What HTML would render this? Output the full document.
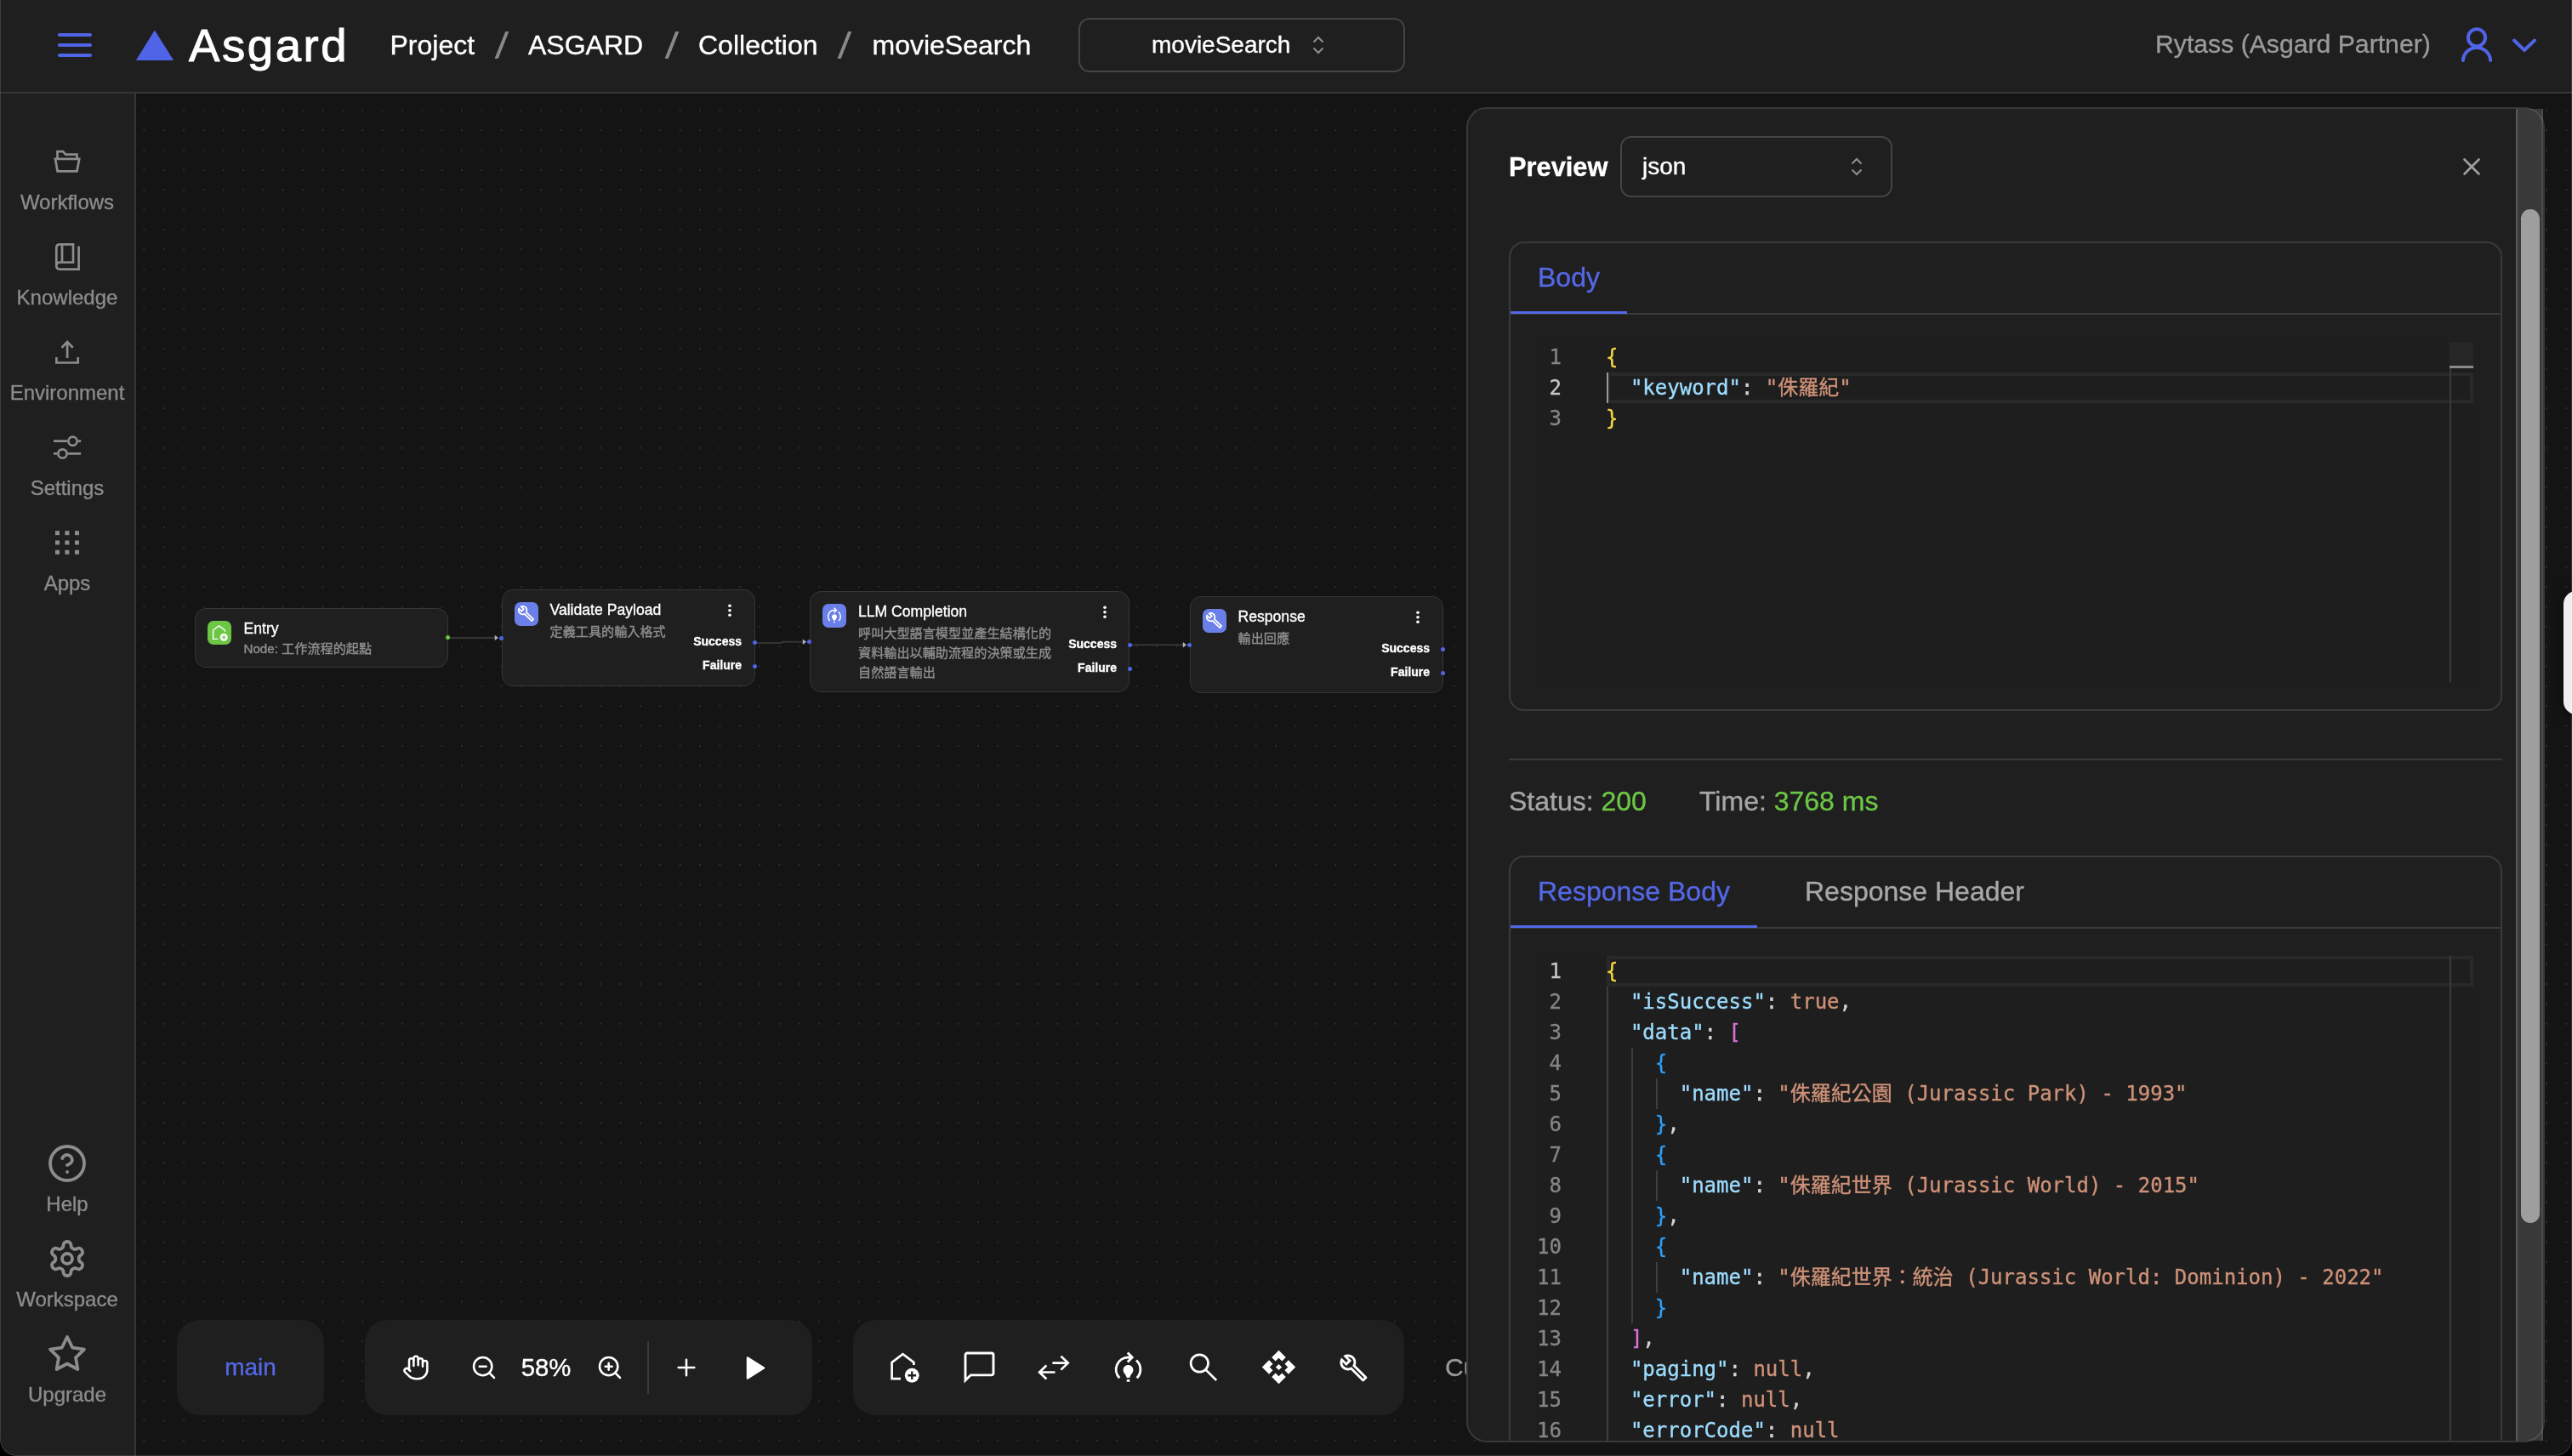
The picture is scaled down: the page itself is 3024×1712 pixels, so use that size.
<!DOCTYPE html>
<html lang="zh-Hant"><head><meta charset="utf-8"><title>Asgard - movieSearch</title>
<style>
*{box-sizing:border-box;margin:0;padding:0}
html,body{width:3024px;height:1712px;overflow:hidden;background:#141414}
body{position:relative;font-family:"Liberation Sans","Noto Sans CJK TC",sans-serif;color:#fff;-webkit-font-smoothing:antialiased;-webkit-text-stroke-width:0.350px}
#root{position:absolute;left:0;top:0;width:3024px;height:1712px;overflow:hidden;will-change:transform}
.abs{position:absolute}
.t{position:absolute;white-space:nowrap;line-height:1}
#canvas{position:absolute;left:160px;top:110px;width:2864px;height:1602px;background-color:#141414;
 background-image:radial-gradient(circle,rgba(120,120,120,0.7) 0.300px,rgba(120,120,120,0) 0.900px);background-size:23.344px 23.344px;background-position:-2.222px 8.228px}
#header{position:absolute;left:0;top:0;width:3024px;height:110px;background:#1f1f1f;border-bottom:2px solid #353535}
#sidebar{position:absolute;left:0;top:110px;width:160px;height:1602px;background:#1f1f1f;border-right:2px solid #353535}
.sl{position:absolute;left:0;width:158px;text-align:center;font-size:24px;line-height:28px;color:#8c8c8c}
.bc{font-size:32px;color:#fff}
.sep{font-size:42px;color:#8a8a8a;transform:skewX(-7deg);-webkit-text-stroke:0.800px #8a8a8a}
.tb{position:absolute;top:1552px;height:112px;background:#1f1f1f;border-radius:26px}
svg{position:absolute;overflow:visible}
.node{position:absolute;background:#1f1f1f;border:1.500px solid #353535;border-radius:13px}
.nicon{position:absolute;width:28px;height:28px;border-radius:7px}
.nt{position:absolute;white-space:nowrap;font-size:17.600px;line-height:20px;color:#fff}
.nd{position:absolute;font-size:15.150px;line-height:23.3px;color:#8f8f8f}
.nh{position:absolute;white-space:nowrap;font-size:14px;line-height:16px;font-weight:700;color:#fff;text-align:right}
.dot{position:absolute;width:5px;height:5px;border-radius:50%;background:#4f64e6}
.card{position:absolute;left:1774px;width:1168px;border:2px solid #3a3a3a;border-radius:18px;background:#1f1f1f}
.ln{position:absolute;left:0;width:30px;text-align:right;font-family:"DejaVu Sans Mono","Liberation Mono","Noto Sans CJK TC",monospace;font-size:24px;line-height:36px;color:#858585;white-space:pre}
.cl{position:absolute;left:82px;font-family:"DejaVu Sans Mono","Liberation Mono","Noto Sans CJK TC",monospace;font-size:24px;line-height:36px;color:#d4d4d4;white-space:pre}
.k{color:#9cdcfe} .s{color:#ce9178} .b1{color:#f5d53f} .b2{color:#d670d6} .b3{color:#2f9df5}
.ed{position:absolute;left:1806px;width:1102px;background:#1e1e1e;overflow:hidden}
.guide{position:absolute;width:2px;background:#404040}
</style></head>
<body>
<div id="root">
<div id="canvas"></div>
<svg style="left:0;top:0" width="3024" height="1712">
<g fill="none" stroke="#343434" stroke-width="2">
<path d="M526.700 749.900H583"/>
<path d="M887.500 755.900H918.500L920.500 754.800H945"/>
<path d="M1328.200 758.200H1392"/>
</g>
<g fill="#b1b1b7">
<path d="M581.700 746.700L586 749.900 581.700 753.100z"/>
<path d="M943.800 751.600L948.100 754.800 943.800 758z"/>
<path d="M1390.800 755L1395.100 758.200 1390.800 761.400z"/>
</g></svg>
<div class="node" style="left:229px;top:715px;width:298px;height:70px"><div class="nicon" style="left:13.5px;top:13.500px;background:#6cc644"><svg style="left:2.5px;top:2.5px" width="23" height="23" viewBox="0 0 24 24"><path fill="none" stroke="#fff" stroke-width="1.500" stroke-linejoin="miter" d="M10.600 20.200H4.800V9.400L12 4l7.200 5.400v1.800"/><circle cx="18" cy="18" r="4.7" fill="#fff"/><path stroke="#6cc644" stroke-width="1.3" fill="none" d="M15.3 18h5.4M18 15.3v5.4"/></svg></div><div class="nt" style="left:56.5px;top:13px">Entry</div><div class="nd" style="left:56.5px;top:34.5px;white-space:nowrap;">Node: 工作流程的起點</div></div>
<div class="node" style="left:590px;top:693px;width:297.5px;height:114px"><div class="nicon" style="left:13.5px;top:13.500px;background:#6b7fe8"><svg style="left:3.7px;top:3.7px" width="21" height="21" viewBox="0 0 24 24"><path fill="#fff" d="M22.61 18.99l-9.08-9.08c.93-2.34.45-5.1-1.44-7C9.79.61 6.21.4 3.66 2.26L7.5 6.11 6.08 7.52 2.25 3.69C.39 6.23.6 9.82 2.9 12.11c1.86 1.86 4.57 2.35 6.89 1.48l9.11 9.11c.39.39 1.02.39 1.41 0l2.3-2.3c.4-.38.4-1.01 0-1.41zm-3 1.6l-9.46-9.46c-.61.45-1.29.72-2 .82-1.36.2-2.79-.21-3.83-1.25C3.37 9.76 2.93 8.5 3 7.26l3.09 3.09 4.24-4.24-3.09-3.09c1.24-.07 2.49.37 3.44 1.31 1.08 1.08 1.49 2.57 1.24 3.96-.12.71-.42 1.37-.88 1.96l9.45 9.45-.88.89z"/></svg></div><div class="nt" style="left:55.5px;top:12.5px">Validate Payload</div><div class="nd" style="left:55.5px;top:36.9px;white-space:nowrap;">定義工具的輸入格式</div><svg style="left:263.5px;top:16px" width="6" height="16" viewBox="0 0 6 16"><circle cx="3" cy="2.2" r="1.800" fill="#fff"/><circle cx="3" cy="7.700" r="1.800" fill="#fff"/><circle cx="3" cy="13.200" r="1.800" fill="#fff"/></svg></div>
<div class="node" style="left:952px;top:695px;width:376px;height:119px"><div class="nicon" style="left:13.5px;top:13.500px;background:#6b7fe8"><svg style="left:3px;top:3px" width="22" height="22" viewBox="0 0 24 24"><path fill="none" stroke="#fff" stroke-width="1.6" d="M6.3 18.6A8 8 0 0 1 12 5h2.2M11.6 1.9L14.6 5l-3 3.1M17.3 7A8 8 0 0 1 17.7 18.6"/><path fill="#fff" d="M15.3 13.4c0 1.9-2.1 3.2-2.3 5h-2c-.2-1.800-2.300-3.100-2.300-5 0-1.820 1.480-3.300 3.300-3.300s3.300 1.480 3.300 3.300zM11 19.600h2V21h-2z"/></svg></div><div class="nt" style="left:56px;top:12.5px">LLM Completion</div><div class="nd" style="left:56px;top:36.9px;width:234px;">呼叫大型語言模型並產生結構化的資料輸出以輔助流程的決策或生成自然語言輸出</div><svg style="left:343px;top:16px" width="6" height="16" viewBox="0 0 6 16"><circle cx="3" cy="2.2" r="1.800" fill="#fff"/><circle cx="3" cy="7.700" r="1.800" fill="#fff"/><circle cx="3" cy="13.200" r="1.800" fill="#fff"/></svg></div>
<div class="node" style="left:1399px;top:701px;width:297.5px;height:114px"><div class="nicon" style="left:13.5px;top:13.500px;background:#6b7fe8"><svg style="left:3.7px;top:3.7px" width="21" height="21" viewBox="0 0 24 24"><path fill="#fff" d="M22.61 18.99l-9.08-9.08c.93-2.34.45-5.1-1.44-7C9.79.61 6.21.4 3.66 2.26L7.5 6.11 6.08 7.52 2.25 3.69C.39 6.23.6 9.82 2.9 12.11c1.86 1.86 4.57 2.35 6.89 1.48l9.11 9.11c.39.39 1.02.39 1.41 0l2.3-2.3c.4-.38.4-1.01 0-1.41zm-3 1.6l-9.46-9.46c-.61.45-1.29.72-2 .82-1.36.2-2.79-.21-3.83-1.25C3.37 9.76 2.93 8.5 3 7.26l3.09 3.09 4.24-4.24-3.09-3.09c1.24-.07 2.49.37 3.44 1.31 1.08 1.08 1.49 2.57 1.24 3.96-.12.71-.42 1.37-.88 1.96l9.45 9.45-.88.89z"/></svg></div><div class="nt" style="left:55.5px;top:12.5px">Response</div><div class="nd" style="left:55.5px;top:36.9px;white-space:nowrap;">輸出回應</div><svg style="left:263.5px;top:16px" width="6" height="16" viewBox="0 0 6 16"><circle cx="3" cy="2.2" r="1.800" fill="#fff"/><circle cx="3" cy="7.700" r="1.800" fill="#fff"/><circle cx="3" cy="13.200" r="1.800" fill="#fff"/></svg></div>
<div class="nh" style="right:2152px;top:745.5px">Success</div>
<div class="nh" style="right:2152px;top:773.5px">Failure</div>
<div class="nh" style="right:1711px;top:748.5px">Success</div>
<div class="nh" style="right:1711px;top:776.5px">Failure</div>
<div class="nh" style="right:1343px;top:753.5px">Success</div>
<div class="nh" style="right:1343px;top:781.5px">Failure</div>
<div class="dot" style="left:524.2px;top:747.4px;background:#6cc644"></div>
<div class="dot" style="left:587.3px;top:747.5px;background:#4f64e6"></div>
<div class="dot" style="left:884.95px;top:753.4px;background:#4f64e6"></div>
<div class="dot" style="left:884.95px;top:781.3px;background:#4f64e6"></div>
<div class="dot" style="left:949.1px;top:752.3px;background:#4f64e6"></div>
<div class="dot" style="left:1325.7px;top:755.7px;background:#4f64e6"></div>
<div class="dot" style="left:1325.7px;top:783.6px;background:#4f64e6"></div>
<div class="dot" style="left:1396.2px;top:755.7px;background:#4f64e6"></div>
<div class="dot" style="left:1693.9px;top:761.0px;background:#4f64e6"></div>
<div class="dot" style="left:1693.9px;top:789.0px;background:#4f64e6"></div>
<div class="tb" style="left:208px;width:173px"></div>
<div class="t" style="left:208px;width:173px;text-align:center;top:1592px;font-size:28px;color:#5468e7;line-height:32px">main</div>
<div class="tb" style="left:429px;width:526px"></div>
<div class="tb" style="left:1003px;width:648px"></div>
<svg style="left:473.0px;top:1592.0px" width="32" height="32" viewBox="0 0 24 24" fill="none" stroke="#fff" stroke-width="1.9" stroke-linecap="round" stroke-linejoin="round"><path d="M18 11V6a2 2 0 0 0-2-2a2 2 0 0 0-2 2"/><path d="M14 10V4a2 2 0 0 0-2-2a2 2 0 0 0-2 2v2"/><path d="M10 10.500V6a2 2 0 0 0-2-2a2 2 0 0 0-2 2v8"/><path d="M18 8a2 2 0 1 1 4 0v6a8 8 0 0 1-8 8h-2c-2.800 0-4.500-.86-5.990-2.340l-3.600-3.600a2 2 0 0 1 2.830-2.820L7 15"/></svg>
<svg style="left:552.8px;top:1592.0px" width="32" height="32" viewBox="0 0 24 24" fill="none" stroke="#fff" stroke-width="1.9" stroke-linecap="round" stroke-linejoin="round"><circle cx="11" cy="11" r="8"/><path d="M21 21l-4.350-4.350M8 11h6"/></svg>
<div class="t" style="left:592px;width:100px;text-align:center;top:1592px;font-size:29.300px;line-height:32px;color:#fff">58%</div>
<svg style="left:700.7px;top:1592.0px" width="32" height="32" viewBox="0 0 24 24" fill="none" stroke="#fff" stroke-width="1.9" stroke-linecap="round" stroke-linejoin="round"><circle cx="11" cy="11" r="8"/><path d="M21 21l-4.350-4.350M8 11h6M11 8v6"/></svg>
<div class="abs" style="left:761px;top:1577px;width:2px;height:62px;background:#3a3a3a"></div>
<svg style="left:790.8px;top:1592.0px" width="32" height="32" viewBox="0 0 24 24" fill="none" stroke="#fff" stroke-width="1.9" stroke-linecap="round" stroke-linejoin="round"><path d="M5 12h14M12 5v14"/></svg>
<svg style="left:876px;top:1594px" width="26" height="29" viewBox="0 0 26 29"><path d="M3 2.500L22 14.500 3 26.500z" fill="#fff" stroke="#fff" stroke-width="2.500" stroke-linejoin="round"/></svg>
<svg style="left:1039.5px;top:1585.0px" width="43" height="43" viewBox="0 0 24 24"><path fill="none" stroke="#fff" stroke-width="1.500" stroke-linejoin="miter" d="M10.600 20.200H4.800V9.400L12 4l7.200 5.400v1.800"/><circle cx="18" cy="18" r="4.7" fill="#fff"/><path stroke="#1f1f1f" stroke-width="1.3" fill="none" d="M15.3 18h5.4M18 15.3v5.4"/></svg>
<svg style="left:1129.5px;top:1586.0px" width="43" height="43" viewBox="0 0 24 24"><path fill="none" stroke="#fff" stroke-width="1.600" stroke-linejoin="miter" d="M4 2.800h16a1.200 1.200 0 0 1 1.200 1.200v12a1.200 1.200 0 0 1-1.200 1.200H6.300L2.800 20.700V4a1.200 1.200 0 0 1 1.200-1.200z"/></svg>
<svg style="left:0;top:0" width="3024" height="1712"><g fill="none" stroke="#fff" stroke-width="2.700"><path d="M1237.400 1602.600H1255M1247.400 1594.600l8.300 8 -8.300 8M1240.500 1613.500H1223M1230.400 1605.600l-8.300 7.900 8.300 8"/><circle cx="1410.300" cy="1603" r="10.200"/><path d="M1417.600 1610.600l12.600 12.400"/></g></svg>
<svg style="left:1305.0px;top:1586.5px" width="43" height="43" viewBox="0 0 24 24"><path fill="none" stroke="#fff" stroke-width="1.6" d="M6.3 18.6A8 8 0 0 1 12 5h2.2M11.6 1.9L14.6 5l-3 3.1M17.3 7A8 8 0 0 1 17.7 18.6"/><path fill="#fff" d="M15.3 13.4c0 1.9-2.1 3.2-2.3 5h-2c-.2-1.800-2.300-3.100-2.300-5 0-1.820 1.480-3.300 3.300-3.300s3.300 1.480 3.300 3.300zM11 19.600h2V21h-2z"/></svg>
<svg style="left:1481.5px;top:1586.0px" width="43" height="43" viewBox="0 0 24 24"><path fill="#fff" d="M14 12l-2 2-2-2 2-2 2 2zm-2-6l2.120 2.120 2.500-2.500L12 1 7.380 5.620l2.500 2.500L12 6zm-6 6l2.120-2.120-2.500-2.500L1 12l4.620 4.620 2.500-2.500L6 12zm12 0l-2.120 2.120 2.500 2.500L23 12l-4.620-4.620-2.500 2.500L18 12zm-6 6l-2.120-2.120-2.500 2.500L12 23l4.620-4.620-2.500-2.500L12 18z"/></svg>
<svg style="left:1573.5px;top:1591px" width="35" height="35" viewBox="0 0 24 24"><path fill="#fff" d="M22.61 18.99l-9.08-9.08c.93-2.34.45-5.1-1.44-7C9.79.61 6.21.4 3.66 2.26L7.5 6.11 6.08 7.52 2.25 3.69C.39 6.23.6 9.82 2.9 12.11c1.86 1.86 4.57 2.35 6.89 1.48l9.11 9.11c.39.39 1.02.39 1.41 0l2.3-2.3c.4-.38.4-1.01 0-1.41zm-3 1.6l-9.46-9.46c-.61.45-1.29.72-2 .82-1.36.2-2.79-.21-3.83-1.25C3.37 9.76 2.93 8.5 3 7.26l3.09 3.09 4.24-4.24-3.09-3.09c1.24-.07 2.49.37 3.44 1.31 1.08 1.08 1.49 2.57 1.24 3.96-.12.71-.42 1.37-.88 1.96l9.45 9.45-.88.89z"/></svg>
<div class="t" style="left:1699px;top:1592px;font-size:30px;line-height:32px;color:#9a9a9a">Cu</div>
<div id="header"></div>
<svg style="left:0;top:0" width="420" height="108"><g stroke="#4f64e6" stroke-width="4.200" stroke-linecap="round"><path d="M70 41H106M70 53H106M70 65H106"/></g><path d="M181.800 35.400L204.200 71H159.800z" fill="#4f64e6"/></svg>
<div class="t" style="left:222px;top:22px;font-size:54.500px;line-height:64px;letter-spacing:2.600px;-webkit-text-stroke:1px #fff">Asgard</div>
<div class="t bc" style="left:458.500px;top:35px;line-height:36px">Project</div>
<div class="t sep" style="left:584px;top:36px;line-height:36px">/</div>
<div class="t bc" style="left:621px;top:35px;line-height:36px">ASGARD</div>
<div class="t sep" style="left:783.500px;top:36px;line-height:36px">/</div>
<div class="t bc" style="left:821px;top:35px;line-height:36px">Collection</div>
<div class="t sep" style="left:987px;top:36px;line-height:36px">/</div>
<div class="t bc" style="left:1025.500px;top:35px;line-height:36px">movieSearch</div>
<div class="abs" style="left:1268px;top:21px;width:384px;height:64px;border:2px solid #444;border-radius:13px"></div>
<div class="t" style="left:1354px;top:37px;font-size:28px;line-height:32px;color:#fff">movieSearch</div>
<svg style="left:1541.7px;top:41px" width="16" height="24" viewBox="0 0 16 24"><path fill="none" stroke="#909090" stroke-width="2" d="M2.500 8.500L8 3l5.500 5.500M2.500 15.500L8 21l5.500-5.500"/></svg>
<div class="t" style="left:2534px;top:35px;font-size:30.200px;line-height:34px;color:#9a9a9a">Rytass (Asgard Partner)</div>
<svg style="left:2888px;top:29px" width="48" height="48" viewBox="0 0 24 24" fill="none" stroke="#4f64e6" stroke-width="2" stroke-linecap="round"><circle cx="12" cy="7.650" r="5.050"/><path d="M3.900 21a8.120 8.120 0 0 1 16.200 0"/></svg>
<svg style="left:2950px;top:40px" width="36" height="26" viewBox="0 0 36 26" fill="none" stroke="#4f64e6" stroke-width="4" stroke-linecap="round" stroke-linejoin="round"><path d="M6 7.500l12 11.500 12-11.500"/></svg>
<div id="sidebar"></div>
<svg style="left:0;top:0" width="160" height="1712"><g fill="none" stroke="#8c8c8c" stroke-width="2.700" stroke-linejoin="miter">
<path d="M67.500 186V178.200H74L77.200 181.700H90.400V186"/><path d="M65 186.800H93.200L90.500 201.300H67.600z"/>
<path d="M92.600 289.500V316.600H70.500Q66.300 316.600 66.300 312.500V291.500Q66.300 287.400 70.500 287.400H86V308.500H70.500Q66.300 308.500 66.300 312.500M73 287.400V308.500"/>
<path d="M79.100 401.500V421M72.600 408.700L79.100 402 85.700 408.700M66.400 420V426.500H91.700V420"/>
<path d="M63 518.700H79M92 518.700H95.200"/><circle cx="85.500" cy="518.700" r="5.100"/>
<path d="M63 533.400H67M80 533.400H95.200"/><circle cx="73.500" cy="533.400" r="5.100"/>
</g><g fill="#8c8c8c"><rect x="65" y="624.2" width="5" height="5"/><rect x="65" y="635.5" width="5" height="5"/><rect x="65" y="646.8" width="5" height="5"/><rect x="76.4" y="624.2" width="5" height="5"/><rect x="76.4" y="635.5" width="5" height="5"/><rect x="76.4" y="646.8" width="5" height="5"/><rect x="88" y="624.2" width="5" height="5"/><rect x="88" y="635.5" width="5" height="5"/><rect x="88" y="646.8" width="5" height="5"/></g></svg>
<div class="sl" style="top:224px">Workflows</div>
<div class="sl" style="top:336px">Knowledge</div>
<div class="sl" style="top:448px">Environment</div>
<div class="sl" style="top:560px">Settings</div>
<div class="sl" style="top:672px">Apps</div>
<div class="sl" style="top:1402px">Help</div>
<div class="sl" style="top:1514px">Workspace</div>
<div class="sl" style="top:1626px">Upgrade</div>
<svg style="left:55.0px;top:1344.0px" width="48" height="48" viewBox="0 0 24 24" fill="none" stroke="#8c8c8c" stroke-width="1.9" stroke-linecap="round" stroke-linejoin="round"><circle cx="12" cy="12" r="10"/><path d="M9.090 9a3 3 0 0 1 5.830 1c0 2-3 3-3 3"/><path d="M12 17h.01"/></svg>
<svg style="left:55.0px;top:1456.0px" width="48" height="48" viewBox="0 0 24 24" fill="none" stroke="#8c8c8c" stroke-width="1.9" stroke-linecap="round" stroke-linejoin="round"><path d="M12.220 2h-.44a2 2 0 0 0-2 2v.18a2 2 0 0 1-1 1.730l-.43.25a2 2 0 0 1-2 0l-.15-.08a2 2 0 0 0-2.730.73l-.22.38a2 2 0 0 0 .73 2.730l.15.1a2 2 0 0 1 1 1.720v.51a2 2 0 0 1-1 1.740l-.15.09a2 2 0 0 0-.73 2.730l.22.38a2 2 0 0 0 2.730.73l.15-.08a2 2 0 0 1 2 0l.43.25a2 2 0 0 1 1 1.730V20a2 2 0 0 0 2 2h.44a2 2 0 0 0 2-2v-.18a2 2 0 0 1 1-1.730l.43-.25a2 2 0 0 1 2 0l.15.08a2 2 0 0 0 2.730-.73l.22-.39a2 2 0 0 0-.73-2.730l-.15-.08a2 2 0 0 1-1-1.740v-.5a2 2 0 0 1 1-1.740l.15-.09a2 2 0 0 0 .73-2.730l-.22-.38a2 2 0 0 0-2.730-.73l-.15.08a2 2 0 0 1-2 0l-.43-.25a2 2 0 0 1-1-1.730V4a2 2 0 0 0-2-2z"/><circle cx="12" cy="12" r="3"/></svg>
<svg style="left:55.0px;top:1568.0px" width="48" height="48" viewBox="0 0 24 24" fill="none" stroke="#8c8c8c" stroke-width="1.9" stroke-linecap="round" stroke-linejoin="round"><path d="M12 2l3.090 6.260L22 9.270l-5 4.870 1.180 6.880L12 17.770l-6.180 3.250L7 14.140 2 9.270l6.910-1.010L12 2z"/></svg>
<div class="abs" style="left:1724px;top:126px;width:1268px;height:1570px;background:#1f1f1f;border-radius:24px"></div>
<div class="abs" style="left:2958px;top:128px;width:32px;height:1566px;background:#393939;border-left:2px solid #5a5a5a;border-right:2px solid #4a4a4a;"></div>
<div class="abs" style="left:2964px;top:246px;width:22px;height:1192px;background:#9e9e9e;border-radius:11px"></div>
<div class="abs" style="left:1724px;top:126px;width:1268px;height:1570px;border:2px solid rgba(255,255,255,0.115);border-radius:24px;pointer-events:none"></div>
<div class="abs" style="left:3014px;top:695px;width:30px;height:145px;background:#efefef;border-radius:17px;box-shadow:0 0 14px rgba(0,0,0,0.55)"></div>
<div class="t" style="left:1774px;top:178.500px;font-size:30.800px;line-height:36px;font-weight:700;color:#fff">Preview</div>
<div class="abs" style="left:1905px;top:160px;width:320px;height:72px;border:2px solid #444;border-radius:13px"></div>
<div class="t" style="left:1931px;top:180px;font-size:28px;line-height:32px;color:#fff">json</div>
<svg style="left:2174.900px;top:184px" width="16" height="24" viewBox="0 0 16 24"><path fill="none" stroke="#909090" stroke-width="2" d="M2.500 8.500L8 3l5.500 5.500M2.500 15.500L8 21l5.500-5.500"/></svg>
<svg style="left:2896px;top:186px" width="20" height="20" viewBox="0 0 20 20"><path fill="none" stroke="#a0a0a0" stroke-width="2.600" stroke-linecap="round" d="M1.500 1.500l17 17M18.500 1.500l-17 17"/></svg>
<div class="card" style="top:284px;height:552px"><div class="abs" style="left:0;top:82px;width:1164px;height:2px;background:#3a3a3a"></div><div class="t" style="left:32px;top:22px;font-size:32px;line-height:36px;color:#5468e7">Body</div><div class="abs" style="left:0px;top:80px;width:137px;height:2.500px;background:#5468e7"></div></div>
<div class="abs" style="left:1774px;top:892px;width:1168px;height:2px;background:#3a3a3a"></div>
<div class="t" style="left:1774px;top:924px;font-size:32px;line-height:36px;color:#a6a6a6">Status: <span style="color:#6cc644">200</span></div>
<div class="t" style="left:1998px;top:924px;font-size:32px;line-height:36px;color:#a6a6a6">Time: <span style="color:#6cc644">3768 ms</span></div>
<div class="abs" style="left:1726px;top:1000px;width:1232px;height:694px;overflow:hidden;border-radius:0 0 0 22px">
<div class="card" style="left:48px;top:6px;height:900px">
<div class="abs" style="left:0;top:82px;width:1164px;height:2px;background:#3a3a3a"></div>
<div class="t" style="left:32px;top:22px;font-size:32px;line-height:36px;color:#5468e7">Response Body</div>
<div class="abs" style="left:0;top:80px;width:290px;height:2.500px;background:#5468e7"></div>
<div class="t" style="left:346px;top:22px;font-size:32px;line-height:36px;color:#a8a8a8">Response Header</div>
</div>
<div class="ed" style="left:80px;top:124px;height:700px"><div class="abs" style="left:83px;top:0px;width:1019px;height:36px;border:4px solid #292929"></div><div class="guide" style="left:83px;top:36px;height:576px;background:#3d3d3d"></div><div class="guide" style="left:112px;top:108px;height:324px;background:#3d3d3d"></div><div class="guide" style="left:141px;top:144px;height:36px;background:#3d3d3d"></div><div class="guide" style="left:141px;top:252px;height:36px;background:#3d3d3d"></div><div class="guide" style="left:141px;top:360px;height:36px;background:#3d3d3d"></div><div class="abs" style="left:1074px;top:0;width:1.500px;height:700px;background:#3a3a3a"></div><div class="ln" style="top:0px;color:#c6c6c6">1</div><div class="cl" style="top:0px"><span class="b1">{</span></div><div class="ln" style="top:36px;color:#858585">2</div><div class="cl" style="top:36px">  <span class="k">"isSuccess"</span>: <span class="s">true</span>,</div><div class="ln" style="top:72px;color:#858585">3</div><div class="cl" style="top:72px">  <span class="k">"data"</span>: <span class="b2">[</span></div><div class="ln" style="top:108px;color:#858585">4</div><div class="cl" style="top:108px">    <span class="b3">{</span></div><div class="ln" style="top:144px;color:#858585">5</div><div class="cl" style="top:144px">      <span class="k">"name"</span>: <span class="s">&quot;侏羅紀公園 (Jurassic Park) - 1993&quot;</span></div><div class="ln" style="top:180px;color:#858585">6</div><div class="cl" style="top:180px">    <span class="b3">}</span>,</div><div class="ln" style="top:216px;color:#858585">7</div><div class="cl" style="top:216px">    <span class="b3">{</span></div><div class="ln" style="top:252px;color:#858585">8</div><div class="cl" style="top:252px">      <span class="k">"name"</span>: <span class="s">&quot;侏羅紀世界 (Jurassic World) - 2015&quot;</span></div><div class="ln" style="top:288px;color:#858585">9</div><div class="cl" style="top:288px">    <span class="b3">}</span>,</div><div class="ln" style="top:324px;color:#858585">10</div><div class="cl" style="top:324px">    <span class="b3">{</span></div><div class="ln" style="top:360px;color:#858585">11</div><div class="cl" style="top:360px">      <span class="k">"name"</span>: <span class="s">&quot;侏羅紀世界：統治 (Jurassic World: Dominion) - 2022&quot;</span></div><div class="ln" style="top:396px;color:#858585">12</div><div class="cl" style="top:396px">    <span class="b3">}</span></div><div class="ln" style="top:432px;color:#858585">13</div><div class="cl" style="top:432px">  <span class="b2">]</span>,</div><div class="ln" style="top:468px;color:#858585">14</div><div class="cl" style="top:468px">  <span class="k">"paging"</span>: <span class="s">null</span>,</div><div class="ln" style="top:504px;color:#858585">15</div><div class="cl" style="top:504px">  <span class="k">"error"</span>: <span class="s">null</span>,</div><div class="ln" style="top:540px;color:#858585">16</div><div class="cl" style="top:540px">  <span class="k">"errorCode"</span>: <span class="s">null</span></div><div class="ln" style="top:576px;color:#858585">17</div><div class="cl" style="top:576px"><span class="b1">}</span></div></div>
</div>
<div class="ed" style="left:1806px;top:402px;height:400px"><div class="abs" style="left:83px;top:36px;width:1019px;height:36px;border:4px solid #292929"></div><div class="guide" style="left:83px;top:36px;height:36px;background:#9a9a9a"></div><div class="abs" style="left:1074px;top:0;width:1.500px;height:400px;background:#3a3a3a"></div><div class="ln" style="top:0px;color:#858585">1</div><div class="cl" style="top:0px"><span class="b1">{</span></div><div class="ln" style="top:36px;color:#c6c6c6">2</div><div class="cl" style="top:36px">  <span class="k">"keyword"</span>: <span class="s">&quot;侏羅紀&quot;</span></div><div class="ln" style="top:72px;color:#858585">3</div><div class="cl" style="top:72px"><span class="b1">}</span></div></div>
<div class="abs" style="left:2880px;top:402px;width:28px;height:30px;background:#262626"></div>
<div class="abs" style="left:2880px;top:430px;width:28px;height:3px;background:#8a8a8a"></div>
<div class="abs" style="left:0;top:-40px;width:3024px;height:1752px;border:1px solid rgba(255,255,255,0.13);border-top:0;border-radius:0 0 20px 20px;box-shadow:0 0 0 40px #000;pointer-events:none"></div>
</div>
</body></html>
